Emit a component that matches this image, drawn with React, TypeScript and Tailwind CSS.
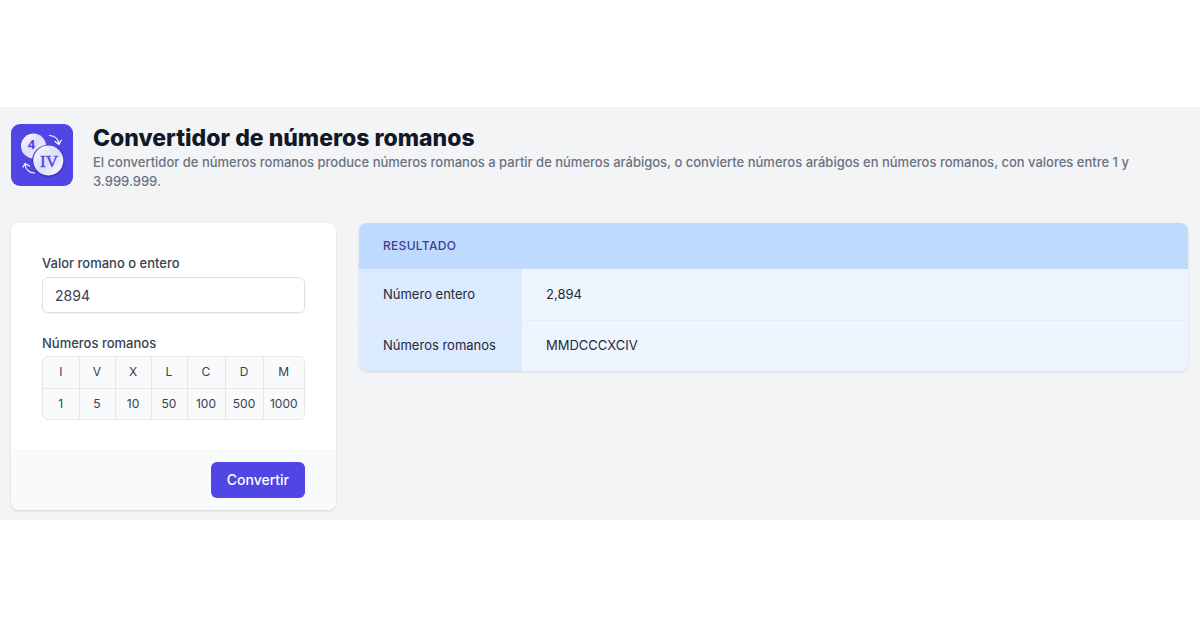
import { useState } from "react";
import type { FormEvent } from "react";

const numerals = [
  { symbol: "I", value: 1 },
  { symbol: "V", value: 5 },
  { symbol: "X", value: 10 },
  { symbol: "L", value: 50 },
  { symbol: "C", value: 100 },
  { symbol: "D", value: 500 },
  { symbol: "M", value: 1000 },
];

const steps: [string, number][] = [
  ["M", 1000],
  ["CM", 900],
  ["D", 500],
  ["CD", 400],
  ["C", 100],
  ["XC", 90],
  ["L", 50],
  ["XL", 40],
  ["X", 10],
  ["IX", 9],
  ["V", 5],
  ["IV", 4],
  ["I", 1],
];

function toRoman(n: number) {
  let rest = n;
  let out = "";
  for (const [symbol, value] of steps) {
    while (rest >= value) {
      out += symbol;
      rest -= value;
    }
  }
  return out;
}

function parseValue(text: string) {
  const input = text.trim().toUpperCase();
  if (/^\d+$/.test(input)) return Math.min(Number(input), 3999999);

  let total = 0;
  let rest = input;
  for (const [symbol, value] of steps) {
    while (rest.startsWith(symbol)) {
      total += value;
      rest = rest.slice(symbol.length);
    }
  }
  return total;
}

function Logo() {
  return (
    <svg viewBox="0 0 62 62" className="size-[62px] shrink-0" aria-hidden="true">
      <defs>
        <linearGradient id="coin" x1="0" y1="0" x2="1" y2="1">
          <stop offset="0" stopColor="#ffffff" />
          <stop offset="0.5" stopColor="#dddcfb" />
          <stop offset="1" stopColor="#ffffff" />
        </linearGradient>
      </defs>
      <rect width="62" height="62" rx="9" fill="#4f46e5" />
      <circle cx="22.5" cy="22" r="12.5" fill="url(#coin)" />
      <circle cx="37.3" cy="37" r="16.3" fill="#4338ca" />
      <circle cx="37.3" cy="36.5" r="15" fill="url(#coin)" />
      <text x="20.5" y="25" textAnchor="middle" fontSize="13" fontWeight="700" fill="#4f46e5" className="font-['Noto_Sans',sans-serif]">
        4
      </text>
      <text x="38" y="42.500" textAnchor="middle" fontSize="17" fontWeight="400" fill="#4f46e5" stroke="#4f46e5" strokeWidth="0.4" className="font-['Liberation_Serif',serif]">
        IV
      </text>
      <g fill="none" stroke="#fff" strokeWidth="1.2" strokeLinecap="round" strokeLinejoin="round">
        <path d="M38.5 11.5c5 .3 9 3.5 9.500 9M44 17.500l4 3 2.300-4.300" />
        <path d="M23.500 49c-5-.3-9-3.500-9.500-9M12 43l2-3.500 4.500 2.500" />
      </g>
    </svg>
  );
}

export default function App() {
  const [text, setText] = useState("2894");
  const [result, setResult] = useState(2894);

  function handleSubmit(e: FormEvent) {
    e.preventDefault();
    setResult(parseValue(text));
  }

  return (
    <div className="min-h-screen bg-white pt-[107px] font-['Inter',sans-serif] text-sm text-gray-700">
      <main className="bg-[#f3f4f6] pt-[17px] pr-3 pb-[10px] pl-[11px]">
        {/* Header */}
        <header className="flex items-start gap-5">
          <Logo />
          <div>
            <h1 className="text-[23px] leading-[29px] font-extrabold text-[#111827]">Convertidor de números romanos</h1>
            <p className="text-[13px] leading-[19px] font-medium text-[#6b7280]">
              El convertidor de números romanos produce números romanos a partir de números arábigos, o convierte
              números arábigos en números romanos, con valores entre 1 y 3.999.999.
            </p>
          </div>
        </header>

        <div className="mt-8 grid grid-cols-[325px_minmax(0,1fr)] items-start gap-[23px]">
          {/* Form */}
          <form onSubmit={handleSubmit} className="overflow-hidden rounded-lg bg-white shadow-sm">
            <div className="px-[31px] py-[30px]">
              <label htmlFor="value" className="block text-[13px] leading-5 font-medium">
                Valor romano o entero
              </label>
              <input
                id="value"
                type="text"
                value={text}
                onChange={(e) => setText(e.target.value)}
                className="mt-1 block h-9 w-full rounded-md border border-[#dcdfe4] bg-white px-3 shadow-xs"
              />

              <div className="mt-5 text-[13px] leading-5 font-medium" id="numerals">
                Números romanos
              </div>
              <div className="mt-[3px] overflow-hidden rounded-md border border-gray-200 bg-gray-50">
                <table aria-labelledby="numerals" className="w-full table-fixed text-center text-xs">
                  <colgroup>
                    <col span={4} className="w-[36px]" />
                    <col span={2} className="w-[38px]" />
                    <col />
                  </colgroup>
                  <tbody className="divide-y divide-gray-200">
                    <tr className="h-[31px] divide-x divide-gray-200">
                      {numerals.map((n) => (
                        <td key={n.symbol}>{n.symbol}</td>
                      ))}
                    </tr>
                    <tr className="h-[31px] divide-x divide-gray-200">
                      {numerals.map((n) => (
                        <td key={n.symbol}>{n.value}</td>
                      ))}
                    </tr>
                  </tbody>
                </table>
              </div>
            </div>

            <div className="flex justify-end border-t border-gray-100 bg-gray-50 px-[31px] pt-[11px] pb-3">
              <button type="submit" className="h-9 rounded-md bg-[#4f46e5] px-4 font-medium text-white">
                Convertir
              </button>
            </div>
          </form>

          {/* Result */}
          <div className="overflow-hidden rounded-lg shadow-sm">
            <table className="w-full text-left text-[13px]">
              <thead className="bg-[#bedbff]">
                <tr>
                  <th colSpan={2} className="h-[46px] px-6 text-xs font-medium tracking-wide text-[#3f3d8f] uppercase">
                    Resultado
                  </th>
                </tr>
              </thead>
              <tbody className="divide-y divide-[#e4edfd] bg-[#eef5ff] text-gray-800">
                <tr>
                  <th scope="row" className="h-[51px] w-[163px] bg-[#dbeafe] px-6 font-normal whitespace-nowrap">
                    Número entero
                  </th>
                  <td className="px-6">{result.toLocaleString("en-US")}</td>
                </tr>
                <tr>
                  <th scope="row" className="h-[51px] bg-[#dbeafe] px-6 font-normal whitespace-nowrap">
                    Números romanos
                  </th>
                  <td className="px-6 break-all">{toRoman(result)}</td>
                </tr>
              </tbody>
            </table>
          </div>
        </div>
      </main>
    </div>
  );
}
